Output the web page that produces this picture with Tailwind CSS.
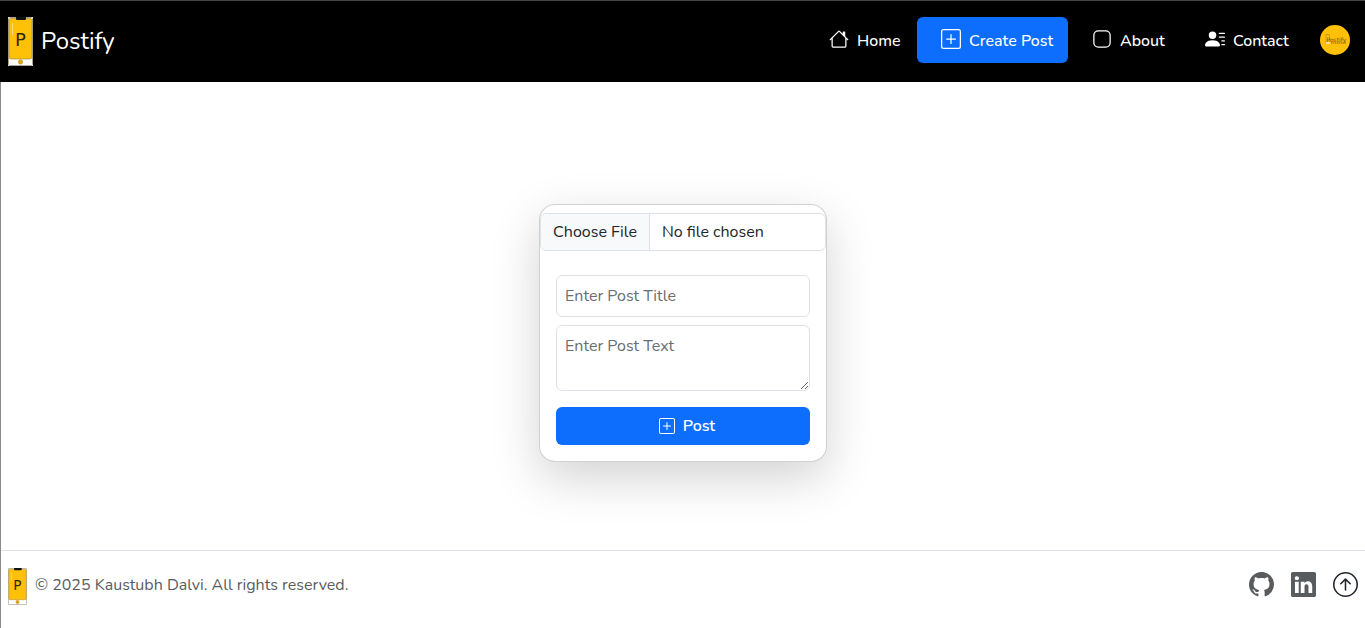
<!DOCTYPE html>
<html lang="en">
<head>
<meta charset="utf-8">
<meta name="viewport" content="width=device-width, initial-scale=1">
<title>Postify</title>
<script src="https://cdn.jsdelivr.net/npm/@tailwindcss/browser@4"></script>
</head>
<body class="flex min-h-screen flex-col bg-white font-['Nunito','Open_Sans',sans-serif] text-base text-[#212529]">
<svg class="hidden" aria-hidden="true">
  <symbol id="phone" viewBox="0 0 25 49" preserveAspectRatio="none">
    <rect width="25" height="49" fill="#fff"/>
    <rect x=".5" y=".5" width="24" height="48" rx="1" fill="none" stroke="#aaa396"/>
    <rect x="1" y="1.5" width="23" height="40.500" rx="2" fill="#ffc107" stroke="#a88b3b" stroke-width=".7"/>
    <path d="M8 0h10v2q0 1-1 1H9q-1 0-1-1z" fill="#111"/>
    <path d="M4.500 6v12" stroke="#ffe08a" stroke-width=".8"/>
    <circle cx="12.500" cy="45" r="2.200" fill="#e5a50a" stroke="#a88b3b" stroke-width=".5"/>
    <text x="7" y="29" font-size="18" font-family="DejaVu Sans, sans-serif" fill="#30280a">P</text>
  </symbol>
  <symbol id="plus-square" viewBox="0 0 16 16">
    <path d="M14 1a1 1 0 0 1 1 1v12a1 1 0 0 1-1 1H2a1 1 0 0 1-1-1V2a1 1 0 0 1 1-1zM2 0a2 2 0 0 0-2 2v12a2 2 0 0 0 2 2h12a2 2 0 0 0 2-2V2a2 2 0 0 0-2-2z"/>
    <path d="M8 4a.5.5 0 0 1 .5.5v3h3a.5.5 0 0 1 0 1h-3v3a.5.5 0 0 1-1 0v-3h-3a.5.5 0 0 1 0-1h3v-3A.5.5 0 0 1 8 4"/>
  </symbol>
</svg>

<header class="flex h-[82px] items-center justify-between border-t border-[#444] bg-black pr-[15px] pl-2 font-medium text-white">
  <a href="#" class="flex items-center gap-2 text-2xl font-normal">
    <svg class="h-[49px] w-[25px]" aria-hidden="true"><use href="#phone"/></svg>
    <span class="pb-0.5">Postify</span>
  </a>
  <div class="flex items-center gap-4 pb-[3px]">
    <nav class="flex items-center">
      <a href="#" class="flex h-[46px] w-[104px] items-center gap-2 pt-0.5 pl-4 whitespace-nowrap">
        <svg class="mb-1 size-5 shrink-0" viewBox="0 0 16 16" fill="currentColor" aria-hidden="true"><path d="M8.707 1.500a1 1 0 0 0-1.414 0L.646 8.146a.5.5 0 0 0 .708.708L2 8.207V13.500A1.500 1.500 0 0 0 3.500 15h9a1.500 1.500 0 0 0 1.500-1.500V8.207l.646.647a.5.5 0 0 0 .708-.708L13 5.793V2.500a.5.5 0 0 0-.5-.5h-1a.5.5 0 0 0-.5.5v1.293zM13 7.207V13.500a.5.5 0 0 1-.5.5h-9a.5.5 0 0 1-.5-.5V7.207l5-5z"/></svg>
        Home
      </a>
      <a href="#" class="flex h-[46px] w-[151px] items-center gap-2 rounded-md bg-[#0d6efd] pt-0.5 pl-6 whitespace-nowrap">
        <svg class="mb-1 size-5 shrink-0" fill="currentColor" aria-hidden="true"><use href="#plus-square"/></svg>
        Create Post
      </a>
      <a href="#" class="flex h-[46px] w-[113px] items-center gap-2 pt-0.5 pl-6 whitespace-nowrap">
        <svg class="mb-1 size-5 shrink-0" viewBox="0 0 16 16" fill="currentColor" aria-hidden="true"><path d="M11 2a3 3 0 0 1 3 3v6a3 3 0 0 1-3 3H5a3 3 0 0 1-3-3V5a3 3 0 0 1 3-3zM5 1a4 4 0 0 0-4 4v6a4 4 0 0 0 4 4h6a4 4 0 0 0 4-4V5a4 4 0 0 0-4-4z"/></svg>
        About
      </a>
      <a href="#" class="flex h-[46px] w-[123px] items-center gap-2 pt-0.5 pl-6 whitespace-nowrap">
        <svg class="mb-1 size-5 shrink-0" viewBox="0 0 16 16" fill="currentColor" aria-hidden="true"><path d="M6 8a3 3 0 1 0 0-6 3 3 0 0 0 0 6m-5 6s-1 0-1-1 1-4 6-4 6 3 6 4-1 1-1 1zM11 3.500a.5.5 0 0 1 .5-.5h4a.5.5 0 0 1 0 1h-4a.5.5 0 0 1-.5-.5m.5 2.500a.5.5 0 0 0 0 1h4a.5.5 0 0 0 0-1zm2 3a.5.5 0 0 0 0 1h2a.5.5 0 0 0 0-1zm0 3a.5.5 0 0 0 0 1h2a.5.5 0 0 0 0-1z"/></svg>
        Contact
      </a>
    </nav>
    <a href="#" aria-label="Profile">
      <svg class="size-[30px]" viewBox="0 0 30 30" aria-hidden="true">
        <circle cx="15" cy="15" r="15" fill="#ffc107"/>
        <rect x="6" y="9.500" width="3.500" height="9" fill="none" stroke="#9b7a1c" stroke-width=".5"/>
        <rect x="6" y="17" width="4" height="2" fill="#f4dfa0"/>
        <text x="6.500" y="16.500" font-size="6" font-family="DejaVu Sans, sans-serif" fill="#6b530a">Postify</text>
        <path d="M11 18h15" stroke="#6b530a" stroke-width=".8" stroke-dasharray="1.500 .5"/>
      </svg>
    </a>
  </div>
</header>

<div class="flex flex-1 flex-col border-l border-[#8a8a8a]">
  <main class="flex flex-1 items-center justify-center pt-[34px]">
    <form class="w-[288px] rounded-2xl border border-black/18 bg-white pt-2 pb-4 shadow-[0_16px_48px_rgba(0,0,0,0.175)]">
      <input type="file" aria-label="Choose post image" class="block h-[38px] w-full rounded-md border border-[#dee2e6] bg-white leading-6 file:mr-3 file:h-9 file:w-[109px] file:rounded-none file:border-r file:border-[#dee2e6] file:bg-[#f8f9fa] file:px-0 file:text-center file:font-normal file:text-[#212529]">
      <div class="flex flex-col px-4 pt-6">
        <input type="text" aria-label="Post title" placeholder="Enter Post Title" class="h-[42px] w-full rounded-md border border-[#dee2e6] px-2 placeholder:text-[#6a6d71]">
        <textarea aria-label="Post text" placeholder="Enter Post Text" class="mt-2 block h-[66px] w-full resize rounded-md border border-[#dee2e6] p-2 placeholder:text-[#6a6d71]"></textarea>
        <button type="button" class="mt-4 flex h-[38px] items-center justify-center gap-2 rounded-md bg-[#0d6efd] pl-2 font-semibold text-white">
          <svg class="size-4" fill="currentColor" aria-hidden="true"><use href="#plus-square"/></svg>
          Post
        </button>
      </div>
    </form>
  </main>

  <footer class="flex h-[78px] items-start justify-between border-t border-[#dee2e6] px-[7px] pt-[17px]">
    <div class="flex items-center gap-2 text-[#595c5f]">
      <svg class="h-[37px] w-[19px]" aria-hidden="true"><use href="#phone"/></svg>
      <p class="mb-1">© 2025 Kaustubh Dalvi. All rights reserved.</p>
    </div>
    <div class="flex items-center gap-[17px] pt-1 text-[#595c5f]">
      <a href="#" aria-label="GitHub"><svg class="size-[25px]" viewBox="0 0 16 16" fill="currentColor" aria-hidden="true"><path d="M8 0C3.580 0 0 3.580 0 8c0 3.540 2.290 6.530 5.470 7.590.4.07.55-.17.55-.38 0-.19-.01-.82-.01-1.490-2.010.37-2.530-.49-2.690-.94-.09-.23-.48-.94-.82-1.130-.28-.15-.68-.52-.01-.53.63-.01 1.080.58 1.230.82.72 1.210 1.870.87 2.330.66.07-.52.28-.87.51-1.070-1.780-.2-3.640-.89-3.640-3.950 0-.87.31-1.590.82-2.150-.08-.2-.36-1.020.08-2.120 0 0 .67-.21 2.200.82.64-.18 1.320-.27 2-.27s1.360.09 2 .27c1.530-1.040 2.200-.82 2.200-.82.44 1.100.16 1.920.08 2.120.51.56.82 1.270.82 2.150 0 3.070-1.870 3.750-3.650 3.950.29.25.54.73.54 1.480 0 1.070-.01 1.930-.01 2.200 0 .21.15.46.55.38A8.010 8.010 0 0 0 16 8c0-4.420-3.580-8-8-8"/></svg></a>
      <a href="#" aria-label="LinkedIn"><svg class="size-[25px]" viewBox="0 0 16 16" fill="currentColor" aria-hidden="true"><path d="M0 1.146C0 .513.526 0 1.175 0h13.650C15.474 0 16 .513 16 1.146v13.708c0 .633-.526 1.146-1.175 1.146H1.175C.526 16 0 15.487 0 14.854zm4.943 12.248V6.169H2.542v7.225zm-1.200-8.212c.837 0 1.358-.554 1.358-1.248-.015-.709-.52-1.248-1.342-1.248S2.400 3.226 2.400 3.934c0 .694.521 1.248 1.327 1.248zm4.908 8.212V9.359c0-.216.016-.432.08-.586.173-.431.568-.878 1.232-.878.869 0 1.216.662 1.216 1.634v3.865h2.401V9.250c0-2.220-1.184-3.252-2.764-3.252-1.274 0-1.845.7-2.165 1.193v.025h-.016l.016-.025V6.169h-2.400c.03.678 0 7.225 0 7.225z"/></svg></a>
      <a href="#" aria-label="Back to top" class="text-[#212529]"><svg class="size-[25px]" viewBox="0 0 16 16" fill="currentColor" aria-hidden="true"><path d="M1 8a7 7 0 1 0 14 0A7 7 0 0 0 1 8m15 0A8 8 0 1 1 0 8a8 8 0 0 1 16 0m-7.500 3.500a.5.5 0 0 1-1 0V5.707L5.354 7.854a.5.5 0 1 1-.708-.708l3-3a.5.5 0 0 1 .708 0l3 3a.5.5 0 0 1-.708.708L8.500 5.707z"/></svg></a>
    </div>
  </footer>
</div>
</body>
</html>
